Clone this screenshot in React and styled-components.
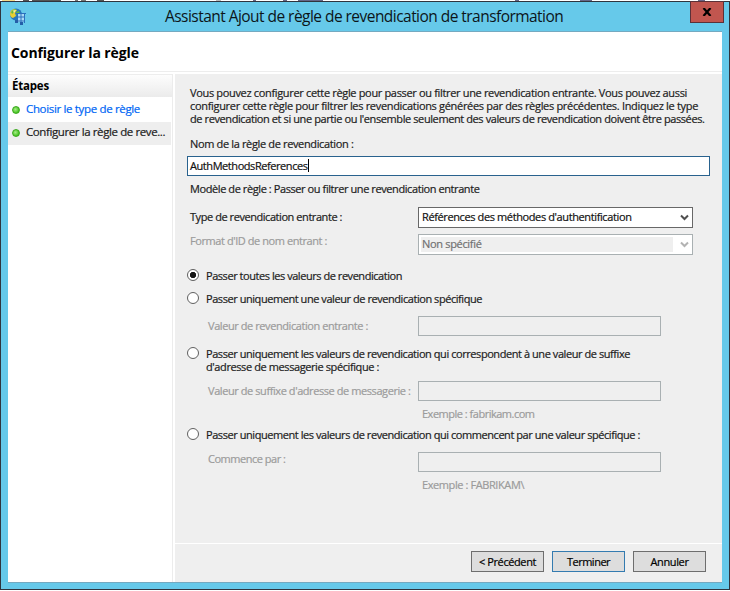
import React from 'react';
import styled, { createGlobalStyle } from 'styled-components';

const Global = createGlobalStyle`
  * { box-sizing: border-box; }
  body { margin: 0; background: #fff; font: 11px/13px "Open Sans", "Noto Sans", sans-serif; color: #1c1c1c; white-space: nowrap; -webkit-text-stroke: 0.2px; }
  #root { width: 730px; height: 591px; overflow: hidden; }
`;

const Backdrop = styled.div`
  height: 1px;
  background: linear-gradient(90deg, #fff 2px, #f5d98a 2px 15px, #fff 15px 23px, #555 23px 29px, #fff 29px 32px, #555 32px 61px, #fff 61px 75px, #777 75px 78px, #fff 78px 81px, #777 81px 86px, #fff 86px 97px, #555 97px 104px, #fff 104px 216px, #bbb 216px 221px, #fff 221px 253px, #668 253px 256px, #fff 256px 283px, #668 283px 287px, #fff 287px 298px, #668 298px 323px, #fff 323px 515px, #668 515px 519px, #fff 519px 580px, #668 580px 592px, #fff 592px 698px, #668 698px 705px, #fff 705px);
`;

const Window = styled.div`
  width: 730px;
  height: 589px;
  display: flex;
  flex-direction: column;
  background: #66c9ea;
  border: 1px solid #30343e;
`;

const TitleBar = styled.header`
  height: 29px;
  display: flex;
  align-items: flex-start;
  padding: 0 5px 0 8px;
`;

const AppIcon = styled.svg`
  width: 18px;
  height: 18px;
  margin-top: 6px;
`;

const Title = styled.h1`
  flex: 1;
  margin: 0;
  padding: 4px 0 0 138px;
  font-size: 15.5px;
  line-height: 20px;
  font-weight: 400;
  letter-spacing: -0.54px;
  -webkit-text-stroke: 0;
  color: #0c1519;
`;

const CloseButton = styled.button`
  width: 34px;
  height: 22px;
  margin-top: -1px;
  padding: 0;
  display: flex;
  align-items: center;
  justify-content: center;
  background: #c1564f;
  border: 1px solid #5b3138;
`;

const Client = styled.div`
  height: 552px;
  margin: 0 7px;
  display: flex;
  flex-direction: column;
  background: #fff;
  border-top: 1px solid #74a9c0;
  border-bottom: 1px solid #74a9c0;
`;

const PageHeader = styled.h2`
  height: 40px;
  margin: 0;
  padding: 11px 0 0 3px;
  font-size: 14px;
  line-height: 20px;
  font-weight: 700;
  letter-spacing: -0.09px;
  -webkit-text-stroke: 0;
  color: #000;
  border-bottom: 1px solid #ededed;
`;

const Body = styled.div`
  flex: 1;
  display: flex;
  padding-top: 2px;
`;

const Sidebar = styled.aside`
  width: 165px;
  border-right: 1px solid #ececec;
  font-size: 11.5px;
`;

const StepsTitle = styled.h3`
  height: 24px;
  margin: 0;
  padding: 4px 0 0 4px;
  font-size: 11.5px;
  font-weight: 700;
  letter-spacing: -0.2px;
  -webkit-text-stroke: 0;
  color: #000;
  background: linear-gradient(#fdfdfd, #ebebeb);
  border-top: 1px solid #ededed;
  border-bottom: 1px solid #fff;
`;

const Step = styled.div`
  width: 163px;
  height: 23px;
  margin-top: ${(p) => (p.$current ? 0 : 1)}px;
  padding: 3px 0 0 4px;
  display: flex;
  letter-spacing: ${(p) => p.$ls}px;
  color: ${(p) => (p.$current ? '#1c1c1c' : '#0066f5')};
  background: ${(p) => (p.$current ? '#eee' : 'transparent')};
`;

const StepDot = styled.span`
  width: 8px;
  height: 8px;
  margin: 4px 6px 0 0;
  border-radius: 50%;
  border: 1px solid #3aa81c;
  background: radial-gradient(circle at 40% 40%, #a6ec86, #45c321 70%);
`;

const Main = styled.main`
  flex: 1;
  margin-left: 2px;
  display: flex;
  flex-direction: column;
  background: #efefef;
`;

const Form = styled.div`
  height: 469px;
  padding: 12px 0 0 12px;
`;

const Text = styled.div`
  height: 13px;
  margin-top: ${(p) => p.$top || 0}px;
  margin-left: ${(p) => p.$left || 0}px;
  letter-spacing: ${(p) => p.$ls}px;
  color: ${(p) => (p.$muted ? '#9b9b9b' : 'inherit')};
`;

const NameInput = styled.div`
  width: 523px;
  height: 20px;
  margin-top: 6px;
  padding: 2px 0 0 2px;
  display: flex;
  background: #fff;
  border: 1px solid #29628e;
  color: #111;
  letter-spacing: -0.435px;
`;

const Caret = styled.span`
  width: 1px;
  height: 13px;
  background: #000;
`;

const Row = styled.div`
  display: flex;
  height: ${(p) => p.$h}px;
  margin-top: ${(p) => p.$top}px;
`;

const RowLabel = styled.div`
  width: 231px;
  padding: ${(p) => p.$pad}px 0 0 ${(p) => p.$left}px;
  letter-spacing: ${(p) => p.$ls}px;
  color: ${(p) => (p.$muted ? '#9b9b9b' : 'inherit')};
`;

const Select = styled.div`
  width: 275px;
  height: 21px;
  padding: 2px 3px 2px 2px;
  display: flex;
  justify-content: space-between;
  background: #fff;
  border: 1px solid ${(p) => (p.$disabled ? '#a9b0b2' : '#686868')};
  color: ${(p) => (p.$disabled ? '#717171' : '#111')};
`;

const SelectValue = styled.span`
  width: 252px;
  height: 15px;
  padding-left: 1px;
  letter-spacing: ${(p) => p.$ls}px;
  background: ${(p) => (p.$disabled ? '#efefef' : 'transparent')};
`;

const Chevron = styled.svg`
  width: 9px;
  height: 7px;
  margin-top: 4px;
  fill: none;
  stroke: ${(p) => (p.$disabled ? '#b3b3b3' : '#505050')};
  stroke-width: 2;
`;

const TextBox = styled.div`
  width: 243px;
  height: 20px;
  border: 1px solid #a9b0b2;
`;

const Radio = styled.span`
  width: 12px;
  height: 12px;
  flex: none;
  margin-right: 7px;
  border: 1px solid #606060;
  border-radius: 50%;
  background: ${(p) => (p.$checked ? 'radial-gradient(circle, #151515 2.8px, #fff 3.5px)' : '#fff')};
`;

const OptionLine = styled.div`
  height: 13px;
  letter-spacing: ${(p) => p.$ls}px;
`;

const Footer = styled.footer`
  flex: 1;
  display: flex;
  justify-content: flex-end;
  gap: 8px;
  padding: 7px 16px 0 0;
  border-top: 1px solid #fff;
`;

const Button = styled.button`
  width: 73px;
  height: 21px;
  padding: 3px 0 0;
  display: flex;
  justify-content: center;
  font: inherit;
  letter-spacing: ${(p) => p.$ls}px;
  color: #000;
  background: #dddddd;
  border: 1px solid ${(p) => (p.$primary ? '#347bb0' : '#6e6e6e')};
`;

function Dropdown({ disabled, ls, children }) {
  return (
    <Select $disabled={disabled}>
      <SelectValue $disabled={disabled} $ls={ls}>{children}</SelectValue>
      <Chevron $disabled={disabled} viewBox="0 0 9 7"><path d="M1 1.5 4.5 5 8 1.5" /></Chevron>
    </Select>
  );
}

function Option({ top, checked, lines }) {
  return (
    <Row $h={13 * lines.length} $top={top}>
      <Radio $checked={checked} />
      <div>{lines.map(([text, ls]) => <OptionLine key={text} $ls={ls}>{text}</OptionLine>)}</div>
    </Row>
  );
}

function Field({ top, pad, ls, label }) {
  return (
    <Row $h={20} $top={top}>
      <RowLabel $pad={pad} $left={21} $ls={ls} $muted>{label}</RowLabel>
      <TextBox />
    </Row>
  );
}

export default function App() {
  return (
    <>
      <Global />
      <Backdrop />
      <Window>
        <TitleBar>
          <AppIcon viewBox="0 0 18 18">
            <circle cx="7" cy="6.5" r="6" fill="#2876bd" />
            <path d="M1 6Q1 2 5 1L8 2 6 5 7 8 4 10Q1 9 1 6Z" fill="#e8cf32" />
            <path d="M2 4Q4 1 7 1L6 3 3 6ZM7 4 10 3 11 6 8 8Z" fill="#64b843" />
            <path d="M4 2.5 7 2 5 5Z" fill="#fff6a8" />
            <path d="M8 5H16V14H8Z" fill="#a9d9f5" />
            <path d="M7 5.5H17M8 9H16M7 13H16M8.5 5V14M12 5V15M15.5 5V15" stroke="#2a70bd" strokeWidth="1" fill="none" />
            <path d="M6 12H9V15H6ZM11 14H14V17H11Z" fill="#245ea8" />
          </AppIcon>
          <Title>Assistant Ajout de règle de revendication de transformation</Title>
          <CloseButton aria-label="Fermer">
            <svg width="10" height="8" viewBox="0 0 10 8"><path d="M1.5 0 8.5 8M8.5 0 1.5 8" stroke="#000" strokeWidth="2.2" /></svg>
          </CloseButton>
        </TitleBar>
        <Client>
          <PageHeader>Configurer la règle</PageHeader>
          <Body>
            <Sidebar>
              <StepsTitle>Étapes</StepsTitle>
              <Step $ls={-0.34}><StepDot />Choisir le type de règle</Step>
              <Step $current $ls={-0.4}><StepDot />Configurer la règle de reve...</Step>
            </Sidebar>
            <Main>
              <Form>
                <Text $left={3} $ls={-0.335}>Vous pouvez configurer cette règle pour passer ou filtrer une revendication entrante. Vous pouvez aussi</Text>
                <Text $left={3} $ls={-0.316}>configurer cette règle pour filtrer les revendications générées par des règles précédentes. Indiquez le type</Text>
                <Text $left={3} $ls={-0.402}>de revendication et si une partie ou l'ensemble seulement des valeurs de revendication doivent être passées.</Text>
                <Text $left={3} $top={12} $ls={-0.352}>Nom de la règle de revendication :</Text>
                <NameInput>AuthMethodsReferences<Caret /></NameInput>
                <Text $left={3} $top={6} $ls={-0.413}>Modèle de règle : Passer ou filtrer une revendication entrante</Text>
                <Row $h={21} $top={12}>
                  <RowLabel $pad={3} $left={3} $ls={-0.439}>Type de revendication entrante :</RowLabel>
                  <Dropdown ls={-0.385}>Références des méthodes d'authentification</Dropdown>
                </Row>
                <Row $h={21} $top={6}>
                  <RowLabel $pad={0} $left={3} $ls={-0.427} $muted>Format d'ID de nom entrant :</RowLabel>
                  <Dropdown disabled ls={-0.321}>Non spécifié</Dropdown>
                </Row>
                <Option top={14} checked lines={[['Passer toutes les valeurs de revendication', -0.452]]} />
                <Option top={10} lines={[['Passer uniquement une valeur de revendication spécifique', -0.441]]} />
                <Field top={11} pad={3} ls={-0.424} label="Valeur de revendication entrante :" />
                <Option top={11} lines={[
                  ['Passer uniquement les valeurs de revendication qui correspondent à une valeur de suffixe', -0.433],
                  ["d'adresse de messagerie spécifique :", -0.401],
                ]} />
                <Field top={8} pad={3} ls={-0.423} label="Valeur de suffixe d'adresse de messagerie :" />
                <Text $top={6} $left={235} $ls={-0.494} $muted>Exemple : fabrikam.com</Text>
                <Option top={8} lines={[['Passer uniquement les valeurs de revendication qui commencent par une valeur spécifique :', -0.437]]} />
                <Field top={11} pad={0} ls={-0.48} label="Commence par :" />
                <Text $top={6} $left={235} $ls={-0.407} $muted>Exemple : FABRIKAM\</Text>
              </Form>
              <Footer>
                <Button $ls={-0.405}>&lt; Précédent</Button>
                <Button $primary $ls={-0.5}>Terminer</Button>
                <Button $ls={-0.378}>Annuler</Button>
              </Footer>
            </Main>
          </Body>
        </Client>
      </Window>
    </>
  );
}
